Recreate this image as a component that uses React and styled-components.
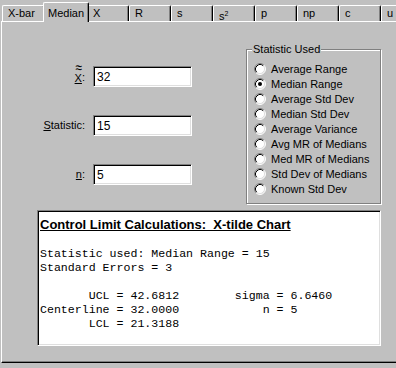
import React from 'react';
import styled, { createGlobalStyle } from 'styled-components';

const GlobalStyle = createGlobalStyle`
  html, body {
    margin: 0;
    padding: 0;
    background: #c0c0c0;
    overflow: hidden;
  }
  body {
    font-family: "Liberation Sans", Arial, sans-serif;
    font-size: 11px;
    color: #000;
  }
`;

const Window = styled.div`
  width: 396px;
  height: 368px;
  background: #c0c0c0;
  overflow: hidden;
`;

const TabStrip = styled.div`
  position: relative;
  z-index: 1;
  display: flex;
  align-items: flex-end;
  height: 21px;
  padding-left: 2px;
`;

const Tab = styled.div`
  flex: none;
  position: relative;
  box-sizing: border-box;
  width: ${({ $w, $active }) => ($active ? $w + 4 : $w)}px;
  height: ${({ $active }) => ($active ? 20 : 16)}px;
  margin: 0 ${({ $active }) => ($active ? -2 : 0)}px ${({ $active }) => ($active ? -1 : 0)}px;
  z-index: ${({ $active }) => ($active ? 2 : 0)};
  padding: ${({ $active }) => ($active ? '4px 0 0 4px' : '1px 0 0 5px')};
  border: 1px solid #fff;
  border-right-color: #000;
  border-bottom: none;
  border-radius: 2px 2px 0 0;
  box-shadow: inset -1px 0 0 #808080;
  background: #c0c0c0;
  line-height: 13px;
  white-space: nowrap;
  overflow: hidden;
`;

const Panel = styled.div`
  box-sizing: border-box;
  width: 420px;
  height: 342px;
  margin-left: 1px;
  border-top: 1px solid #fff;
  border-left: 1px solid #fff;
  border-bottom: 1px solid #000;
  box-shadow: inset 0 -1px 0 #808080;
`;

const TopRow = styled.div`
  box-sizing: border-box;
  display: flex;
  align-items: flex-start;
  height: 188px;
  padding-top: 21px;
`;

const Fields = styled.div`
  display: grid;
  grid-template-columns: 83px 99px;
  grid-auto-rows: 21px;
  column-gap: 8px;
  row-gap: 28px;
  margin-top: 23px;
`;

const FieldLabel = styled.label`
  display: flex;
  align-items: center;
  justify-content: flex-end;
  padding: 0 0 ${({ $lift }) => $lift || 0}px;
  white-space: nowrap;
`;

const Key = styled.span`
  text-decoration: underline;
`;

const TildeKey = styled(Key)`
  position: relative;
  margin-top: 3px;
  &::before {
    content: '≈';
    position: absolute;
    left: 1px;
    top: -9px;
    font-size: 12px;
    line-height: 10px;
    transform: scaleY(1.3);
  }
`;

const Sunken = styled.div`
  box-sizing: border-box;
  background: #fff;
  border: 1px solid;
  border-color: #808080 #fff #fff #808080;
  box-shadow: inset 1px 1px 0 #000, inset -1px -1px 0 #dfdfdf;
`;

const Input = styled(Sunken)`
  display: flex;
  align-items: center;
  padding: 0 3px;
  font-size: 12px;
`;

const GroupBox = styled.fieldset`
  box-sizing: border-box;
  width: 135px;
  height: 161px;
  min-width: 0;
  margin: 0 0 0 54px;
  padding: 5px 6px 0 7px;
  border: 1px solid #808080;
  box-shadow: inset 1px 1px 0 #fff, 1px 1px 0 #fff;
`;

const Legend = styled.legend`
  margin-left: -2px;
  padding: 0 1px;
  line-height: 13px;
  background: #c0c0c0;
`;

const Option = styled.label`
  display: flex;
  align-items: center;
  gap: 5px;
  height: 15px;
  white-space: nowrap;
`;

const Output = styled(Sunken)`
  width: 344px;
  height: 136px;
  margin-left: 35px;
  padding: 6px 2px 0;
`;

const Title = styled.div`
  font-size: 13px;
  font-weight: bold;
  line-height: 15px;
  text-decoration: underline;
  white-space: pre;
`;

const Report = styled.pre`
  margin: 15px 0 0;
  font-family: "Liberation Mono", "Courier New", monospace;
  font-size: 11.6px;
  line-height: 14px;
`;

const RadioIcon = ({ checked }) => (
  <svg width="12" height="12" viewBox="0 0 12 12">
    <circle cx="6" cy="6" r="5" fill="#fff" />
    <path d="M2.11 9.89A5.5 5.5 0 0 1 9.89 2.11" fill="none" stroke="#808080" />
    <path d="M9.89 2.11A5.5 5.5 0 0 1 2.11 9.89" fill="none" stroke="#fff" />
    <path d="M2.82 9.18A4.5 4.5 0 0 1 9.18 2.82" fill="none" stroke="#000" />
    <path d="M9.18 2.82A4.5 4.5 0 0 1 2.82 9.18" fill="none" stroke="#dfdfdf" />
    {checked && <circle cx="6" cy="6" r="2" fill="#000" />}
  </svg>
);

const tabs = [
  ['X-bar', 43],
  ['Median', 42],
  ['X', 42],
  ['R', 42],
  ['s', 42],
  [<>s<sup style={{ fontSize: 7, verticalAlign: 4 }}>2</sup></>, 42],
  ['p', 42],
  ['np', 42],
  ['c', 42],
  ['u', 42],
];

const options = [
  'Average Range',
  'Median Range',
  'Average Std Dev',
  'Median Std Dev',
  'Average Variance',
  'Avg MR of Medians',
  'Med MR of Medians',
  'Std Dev of Medians',
  'Known Std Dev',
];

const report = `Statistic used: Median Range = 15
Standard Errors = 3

       UCL = 42.6812        sigma = 6.6460
Centerline = 32.0000            n = 5
       LCL = 21.3188`;

const App = () => (
  <Window>
    <GlobalStyle />
    <TabStrip>
      {tabs.map(([label, w], i) => (
        <Tab key={i} $w={w} $active={i === 1}>
          {label}
        </Tab>
      ))}
    </TabStrip>
    <Panel>
      <TopRow>
        <Fields>
          <FieldLabel>
            <TildeKey>X</TildeKey>:
          </FieldLabel>
          <Input>32</Input>
          <FieldLabel $lift={2}>
            <Key>S</Key>tatistic:
          </FieldLabel>
          <Input>15</Input>
          <FieldLabel $lift={1}>
            <Key>n</Key>:
          </FieldLabel>
          <Input>5</Input>
        </Fields>
        <GroupBox>
          <Legend>Statistic Used</Legend>
          {options.map((o) => (
            <Option key={o}>
              <RadioIcon checked={o === 'Median Range'} />
              {o}
            </Option>
          ))}
        </GroupBox>
      </TopRow>
      <Output>
        <Title>Control Limit Calculations:  X-tilde Chart</Title>
        <Report>{report}</Report>
      </Output>
    </Panel>
  </Window>
);

export default App;
